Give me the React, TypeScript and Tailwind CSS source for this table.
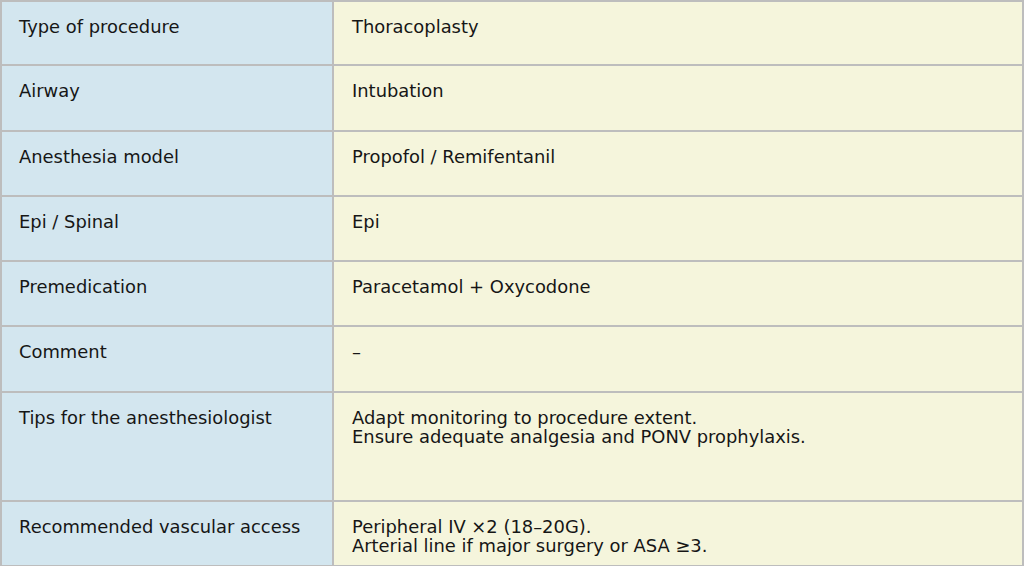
const rows: { label: string; value: string[]; h: string }[] = [
  { label: 'Type of procedure', value: ['Thoracoplasty'], h: 'h-[64.3px]' },
  { label: 'Airway', value: ['Intubation'], h: 'h-[65.3px]' },
  { label: 'Anesthesia model', value: ['Propofol / Remifentanil'], h: 'h-[65.3px]' },
  { label: 'Epi / Spinal', value: ['Epi'], h: 'h-[65.3px]' },
  { label: 'Premedication', value: ['Paracetamol + Oxycodone'], h: 'h-[65.3px]' },
  { label: 'Comment', value: ['–'], h: 'h-[65.3px]' },
  {
    label: 'Tips for the anesthesiologist',
    value: ['Adapt monitoring to procedure extent.', 'Ensure adequate analgesia and PONV prophylaxis.'],
    h: 'h-[109px]',
  },
  {
    label: 'Recommended vascular access',
    value: ['Peripheral IV ×2 (18–20G).', 'Arterial line if major surgery or ASA ≥3.'],
    h: 'h-[65.3px]',
  },
];

export default function App() {
  return (
    <div className="w-[1024px] h-[566px] overflow-hidden bg-white">
      <table
        className="w-full table-fixed border-collapse text-[17.9px] text-[#161616]"
        style={{ fontFamily: '"DejaVu Sans", Verdana, sans-serif' }}
      >
        <colgroup>
          <col className="w-[332px]" />
          <col />
        </colgroup>
        <tbody>
          {rows.map((r, i) => (
            <tr key={r.label} className={r.h}>
              <td
                className={`border-2 border-[#bdbdbd] bg-[#d3e6ef] pl-[17px] pr-3 align-top leading-[19.7px] ${
                  i === 0 ? 'pt-[14.5px]' : 'pt-[15px]'
                }`}
              >
                {r.label}
              </td>
              <td
                className={`border-2 border-[#bdbdbd] bg-[#f5f5dc] pl-[18px] pr-3 align-top leading-[19.7px] ${
                  i === 0 ? 'pt-[14.5px]' : 'pt-[15px]'
                }`}
              >
                {r.value.map((line) => (
                  <div key={line}>{line}</div>
                ))}
              </td>
            </tr>
          ))}
        </tbody>
      </table>
    </div>
  );
}
